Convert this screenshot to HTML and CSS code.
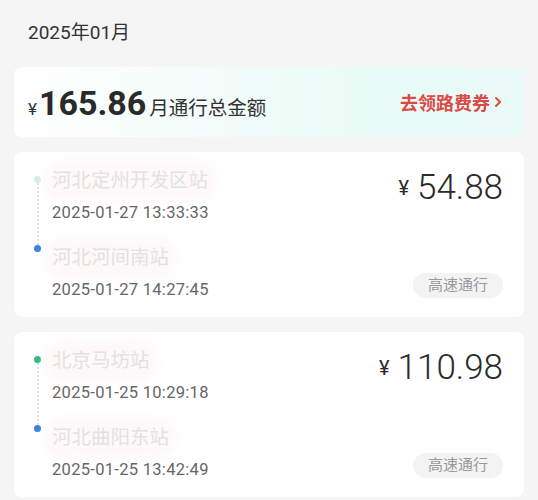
FILE: index.html
```html
<!DOCTYPE html>
<html lang="zh-CN">
<head>
  <meta charset="UTF-8" />
  <meta name="viewport" content="width=device-width, initial-scale=1.0" />
  <title>通行记录</title>
  <link rel="stylesheet" href="styles.css">
</head>
<body>
  <div class="page">
    <div class="month">2025年01月</div>

    <div class="summary">
      <div class="total">
        <span class="yen">¥</span><span class="total-num">165.86</span><span class="total-label">月通行总金额</span>
      </div>
      <a class="coupon" href="#">去领路费券
        <svg width="8" height="12" viewBox="0 0 8 12"><path d="M2 2l4 4-4 4" fill="none" stroke="#dc4a48" stroke-width="2" stroke-linecap="round" stroke-linejoin="round"/></svg>
      </a>
    </div>

    <div class="trip-list">
      <div class="trip">
        <div class="timeline">
          <span class="dot dot-start faded"></span>
          <span class="line"></span>
          <span class="dot dot-end"></span>
        </div>
        <div class="stops">
          <div class="stop">
            <div class="station"><span>河北定州开发区站</span></div>
            <div class="time">2025-01-27 13:33:33</div>
          </div>
          <div class="stop">
            <div class="station"><span>河北河间南站</span></div>
            <div class="time">2025-01-27 14:27:45</div>
          </div>
        </div>
        <div class="side">
          <div class="amount"><span class="amount-yen">¥</span>54.88</div>
          <span class="tag">高速通行</span>
        </div>
      </div>

      <div class="trip">
        <div class="timeline">
          <span class="dot dot-start"></span>
          <span class="line"></span>
          <span class="dot dot-end"></span>
        </div>
        <div class="stops">
          <div class="stop">
            <div class="station"><span>北京马坊站</span></div>
            <div class="time">2025-01-25 10:29:18</div>
          </div>
          <div class="stop">
            <div class="station"><span>河北曲阳东站</span></div>
            <div class="time">2025-01-25 13:42:49</div>
          </div>
        </div>
        <div class="side">
          <div class="amount"><span class="amount-yen">¥</span>110.98</div>
          <span class="tag">高速通行</span>
        </div>
      </div>
    </div>
  </div>
</body>
</html>
```

FILE: styles.css
```css
body {
  margin: 0;
  background: #f5f5f5;
  font-family: Roboto, "Noto Sans CJK SC", sans-serif;
  color: #222;
}
.page {
  padding: 0 14px;
}
.month {
  padding: 20px 0 0 14px;
  font-size: 19px;
  line-height: 26px;
  height: 26px;
  margin-bottom: 21px;
  color: #333;
}
.summary {
  height: 70px;
  border-radius: 8px;
  background: linear-gradient(90deg, #ffffff 0%, #f3fcfa 35%, #e9fbf6 70%, #eafbf7 100%);
  display: flex;
  align-items: center;
  justify-content: space-between;
  padding: 0 22px 0 14px;
}
.total {
  display: flex;
  align-items: baseline;
  padding-top: 2px;
}
.yen {
  font-size: 17px;
  color: #333;
  margin-right: 2px;
}
.total-num {
  font-size: 34px;
  font-weight: bold;
  color: #2a2a2a;
}
.total-label {
  font-size: 19.5px;
  color: #333;
  margin-left: 3px;
}
.coupon {
  display: flex;
  align-items: center;
  gap: 4px;
  color: #dc4a48;
  font-size: 18px;
  font-weight: bold;
  text-decoration: none;
}
.trip-list {
  margin-top: 15px;
  display: flex;
  flex-direction: column;
  gap: 15px;
}
.trip {
  height: 165px;
  box-sizing: border-box;
  background: #fff;
  border-radius: 8px;
  display: flex;
  padding: 0 21px 0 20px;
}
.timeline {
  width: 7px;
  padding-top: 24px;
  display: flex;
  flex-direction: column;
  align-items: center;
}
.dot {
  width: 7px;
  height: 7px;
  border-radius: 50%;
}
.dot-start {
  background: #2dbb80;
}
.dot-start.faded {
  background: #d7ede5;
}
.dot-end {
  background: #3d7fe0;
}
.line {
  height: 62px;
  border-left: 2px dotted #dfe5f0;
}
.stops {
  flex: 1;
  padding: 16px 0 0 11px;
}
.stop + .stop {
  margin-top: 21px;
}
.station {
  font-size: 19.5px;
  line-height: 26px;
  color: #e2e2e2;
}
.station span {
  display: inline-block;
  background: rgba(252, 240, 242, 0.45);
  border-radius: 14px;
  box-shadow: 0 0 10px 8px rgba(252, 240, 242, 0.45);
}
.time {
  margin-top: 8px;
  font-size: 16.5px;
  line-height: 22px;
  letter-spacing: 0.3px;
  color: #666;
}
.side {
  display: flex;
  flex-direction: column;
  align-items: flex-end;
  justify-content: space-between;
  padding: 16px 0 19px;
}
.amount {
  font-size: 35px;
  font-weight: 300;
  line-height: 40px;
  color: #2a2a2a;
}
.amount-yen {
  font-size: 20px;
  font-weight: 400;
  margin-right: 8px;
  vertical-align: 4px;
}
.tag {
  height: 25px;
  line-height: 25px;
  padding: 0 15px;
  border-radius: 13px;
  background: #f3f3f3;
  color: #999;
  font-size: 15px;
}
```
